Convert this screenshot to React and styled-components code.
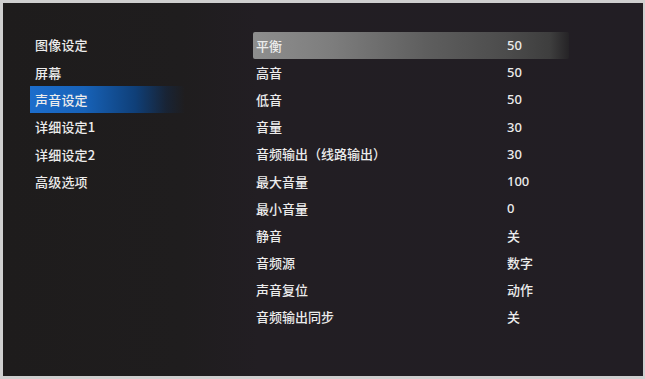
import React from 'react'
import styled, { createGlobalStyle } from 'styled-components'

const GlobalStyle = createGlobalStyle`
  html, body {
    margin: 0;
    padding: 0;
    background: #c9c9c9;
  }
  body {
    font-family: "Noto Sans CJK SC", "Noto Sans", sans-serif;
  }
`

const sideItems = ['图像设定', '屏幕', '声音设定', '详细设定1', '详细设定2', '高级选项']

const rows = [
  ['平衡', '50'],
  ['高音', '50'],
  ['低音', '50'],
  ['音量', '30'],
  ['音频输出（线路输出）', '30'],
  ['最大音量', '100'],
  ['最小音量', '0'],
  ['静音', '关'],
  ['音频源', '数字'],
  ['声音复位', '动作'],
  ['音频输出同步', '关'],
]

export default function App() {
  return (
    <>
      <GlobalStyle />
      <Frame>
        <Screen>
          <Side>
            {sideItems.map((item, i) => (
              <SideItem key={item} active={i === 2}>{item}</SideItem>
            ))}
          </Side>
          <List>
            {rows.map(([label, value], i) => (
              <Row key={label} active={i === 0}>
                <Label>{label}</Label>
                <Value>{value}</Value>
              </Row>
            ))}
          </List>
        </Screen>
      </Frame>
    </>
  )
}

const Frame = styled.div`
  width: 645px;
  height: 379px;
  box-sizing: border-box;
  padding: 3px 2px 3px 3px;
  background: #cfcfcf;
`

const Screen = styled.div`
  width: 100%;
  height: 100%;
  display: flex;
  background: linear-gradient(90deg, #1e1c1c 0%, #1f1d1e 28%, #221e23 40%, #221e24 100%);
`

const Side = styled.div`
  width: 184px;
  box-sizing: border-box;
  padding-top: 28px;
  padding-left: 27px;
  display: flex;
  flex-direction: column;
`

const SideItem = styled.div`
  height: 27.4px;
  display: flex;
  align-items: center;
  padding-left: 5px;
  font-size: 13px;
  font-weight: 500;
  color: #ececec;
  letter-spacing: 0.2px;
  background: ${p => p.active
    ? 'linear-gradient(90deg, #1c6dcc 0%, #1762b8 35%, #0f3f78 68%, rgba(18,42,75,0.5) 88%, rgba(30,30,30,0) 100%)'
    : 'transparent'};
  margin-right: 2px;
`

const List = styled.div`
  padding-top: 28.5px;
  padding-left: 66px;
  display: flex;
  flex-direction: column;
`

const Row = styled.div`
  width: 316px;
  height: 27.2px;
  display: flex;
  align-items: center;
  padding-left: 3px;
  box-sizing: border-box;
  font-size: 13px;
  font-weight: 500;
  color: #ececec;
  background: ${p => p.active
    ? 'linear-gradient(90deg, #8e8e8e 0%, #7d7d7d 25%, #5e5e5e 55%, #4c4c4c 80%, #3e3e3e 94%, rgba(40,40,40,0.5) 100%)'
    : 'transparent'};
  border-radius: 2px;
`

const Label = styled.div`
  width: 251px;
`

const Value = styled.div`
  font-family: "Noto Sans", "Noto Sans CJK SC", sans-serif;
`
